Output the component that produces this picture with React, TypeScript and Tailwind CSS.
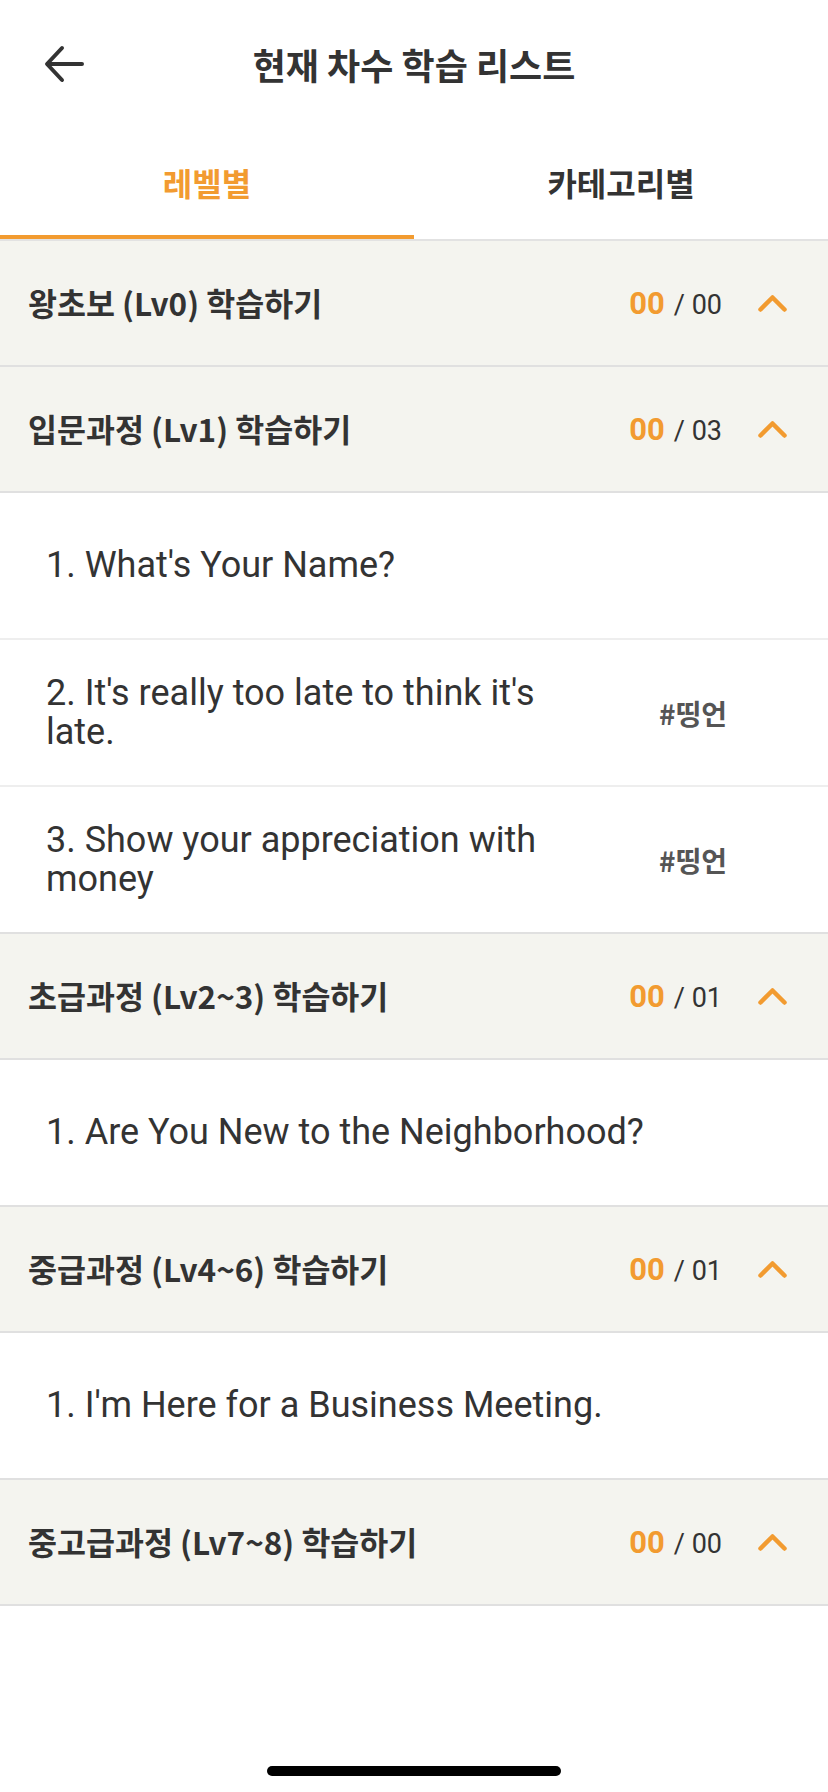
import React from "react";

const KR = { fontFamily: '"Noto Sans CJK KR", "Noto Sans", sans-serif' };
const RB = { fontFamily: 'Roboto, "Noto Sans CJK KR", sans-serif' };

type Item = { text: string; tag?: string };
type Section = { title: string; done: string; total: string; items: Item[] };

const sections: Section[] = [
  { title: "왕초보 (Lv0) 학습하기", done: "00", total: "00", items: [] },
  {
    title: "입문과정 (Lv1) 학습하기",
    done: "00",
    total: "03",
    items: [
      { text: "1. What's Your Name?" },
      { text: "2. It's really too late to think it's late.", tag: "#띵언" },
      { text: "3. Show your appreciation with money", tag: "#띵언" },
    ],
  },
  {
    title: "초급과정 (Lv2~3) 학습하기",
    done: "00",
    total: "01",
    items: [{ text: "1. Are You New to the Neighborhood?" }],
  },
  {
    title: "중급과정 (Lv4~6) 학습하기",
    done: "00",
    total: "01",
    items: [{ text: "1. I'm Here for a Business Meeting." }],
  },
  { title: "중고급과정 (Lv7~8) 학습하기", done: "00", total: "00", items: [] },
];

function ChevronUp() {
  return (
    <svg width="29" height="17" viewBox="0 0 29 17" fill="none">
      <path
        d="M2.5 14.5 L14.5 2.5 L26.5 14.5"
        stroke="#F29B30"
        strokeWidth="4.5"
        strokeLinecap="round"
        strokeLinejoin="round"
      />
    </svg>
  );
}

function BackArrow() {
  return (
    <svg width="41" height="38" viewBox="0 0 41 38" fill="none">
      <path
        d="M38 19 H4 M18 3 L3 19 L18 35"
        stroke="#333333"
        strokeWidth="4"
        strokeLinecap="round"
        strokeLinejoin="round"
      />
    </svg>
  );
}

export default function App() {
  return (
    <div className="w-[828px] h-[1792px] bg-white flex flex-col overflow-hidden">
      {/* App bar */}
      <div className="h-[128px] flex items-center">
        <div className="w-[120px] pl-[44px] flex items-center">
          <BackArrow />
        </div>
        <div
          className="flex-1 text-center text-[36px] font-bold text-[#333333] leading-none"
          style={KR}
        >
          현재 차수 학습 리스트
        </div>
        <div className="w-[120px]" />
      </div>

      {/* Tabs */}
      <div className="flex h-[111px]">
        <div className="w-1/2 flex flex-col">
          <div
            className="flex-1 flex items-center justify-center text-[32px] font-bold text-[#F29B30]"
            style={KR}
          >
            레벨별
          </div>
          <div className="h-[4px] bg-[#F29B30]" />
        </div>
        <div className="w-1/2 flex flex-col">
          <div
            className="flex-1 flex items-center justify-center text-[32px] font-bold text-[#333333]"
            style={KR}
          >
            카테고리별
          </div>
          <div className="h-[4px]" />
        </div>
      </div>
      <div className="h-[2px] bg-[#e2e2e2]" />

      {/* Sections */}
      {sections.map((s) => (
        <div key={s.title}>
          <div className="h-[126px] bg-[#f4f4ef] border-b-2 border-[#e0e0e0] flex items-center pl-[28px] pr-[41px]">
            <div
              className="flex-1 text-[31.5px] font-bold text-[#333333] leading-none"
              style={KR}
            >
              {s.title}
            </div>
            <div className="flex items-baseline leading-none" style={RB}>
              <span className="text-[31px] font-bold text-[#F29B30]">{s.done}</span>
              <span className="text-[27px] text-[#333333] ml-[9px]">/ {s.total}</span>
            </div>
            <div className="ml-[36px] flex items-center">
              <ChevronUp />
            </div>
          </div>
          {s.items.map((it, i) => (
            <div
              key={it.text}
              className={
                "h-[147px] bg-white flex items-center pl-[46px] pr-[40px] border-b-2 " +
                (i === s.items.length - 1 ? "border-[#e0e0e0]" : "border-[#eeeeee]")
              }
            >
              <div
                className={
                  (it.tag ? "w-[514px] " : "flex-1 ") +
                  "text-[36px] leading-[39px] text-[#333333]"
                }
                style={RB}
              >
                {it.text}
              </div>
              {it.tag && (
                <div
                  className="ml-[99px] text-[28px] font-bold text-[#555555] leading-none"
                  style={KR}
                >
                  {it.tag}
                </div>
              )}
            </div>
          ))}
        </div>
      ))}

      <div className="flex-1" />
      <div className="flex justify-center pb-[16px]">
        <div className="w-[294px] h-[10px] rounded-full bg-black" />
      </div>
    </div>
  );
}
